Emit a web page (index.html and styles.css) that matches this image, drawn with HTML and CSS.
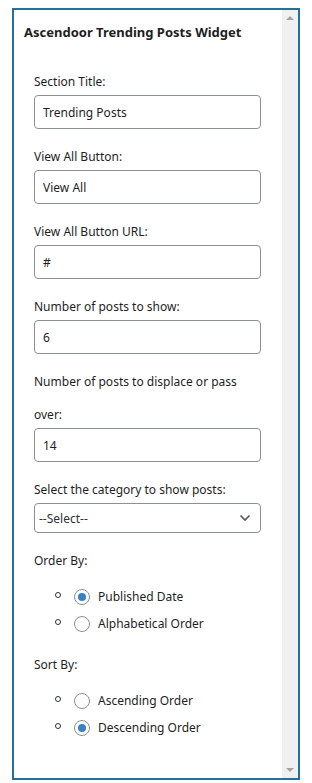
FILE: index.html
```html
<!DOCTYPE html>
<html lang="en">
<head>
  <meta charset="UTF-8" />
  <meta name="viewport" content="width=device-width, initial-scale=1.0"/>
  <title>Ascendoor Trending Posts Widget</title>
  <link rel="stylesheet" href="styles.css">
</head>
<body>
  <div class="widget">
    <div class="widget-body">
      <h3>Ascendoor Trending Posts Widget</h3>
      <form class="widget-form">
        <div class="field">
          <label for="title">Section Title:</label>
          <input type="text" id="title" value="Trending Posts">
        </div>
        <div class="field">
          <label for="button">View All Button:</label>
          <input type="text" id="button" value="View All">
        </div>
        <div class="field">
          <label for="url">View All Button URL:</label>
          <input type="text" id="url" value="#">
        </div>
        <div class="field">
          <label for="count">Number of posts to show:</label>
          <input type="text" id="count" value="6">
        </div>
        <div class="field">
          <label for="offset">Number of posts to displace or pass over:</label>
          <input type="text" id="offset" value="14">
        </div>
        <div class="field">
          <label for="category">Select the category to show posts:</label>
          <div class="select-wrap">
            <select id="category">
              <option>--Select--</option>
            </select>
            <svg class="chevron" width="12" height="8" viewBox="0 0 12 8"><path d="M1.5 1.5 L6 6 L10.5 1.5" fill="none" stroke="#50575e" stroke-width="1.6"/></svg>
          </div>
        </div>
        <div class="field">
          <label>Order By:</label>
          <ul class="choices">
            <li><label class="choice"><input type="radio" name="orderby" checked>Published Date</label></li>
            <li><label class="choice"><input type="radio" name="orderby">Alphabetical Order</label></li>
          </ul>
        </div>
        <div class="field">
          <label>Sort By:</label>
          <ul class="choices">
            <li><label class="choice"><input type="radio" name="order">Ascending Order</label></li>
            <li><label class="choice"><input type="radio" name="order" checked>Descending Order</label></li>
          </ul>
        </div>
      </form>
    </div>
    <div class="scrollbar">
      <span class="arrow up"></span>
      <span class="arrow down"></span>
    </div>
  </div>
</body>
</html>
```

FILE: styles.css
```css
body {
  font-family: 'Noto Sans', 'Open Sans', sans-serif;
  font-size: 12px;
  color: #1e1e1e;
  background: #fff;
  margin: 0;
  padding: 8px 12px;
}
.widget {
  box-sizing: border-box;
  width: 288px;
  height: 772px;
  border: 2px solid #21719a;
  display: flex;
  background: #fff;
}
.widget-body {
  flex: 1;
  padding: 12px 10px 0 10px;
  overflow: hidden;
}
h3 {
  margin: 0;
  font-size: 13px;
  font-weight: 700;
  line-height: 20px;
}
.widget-form {
  margin: 23px 0 0 10px;
  width: 227px;
  display: flex;
  flex-direction: column;
  gap: 11px;
}
.field > label {
  display: block;
  line-height: 33px;
  margin-bottom: -3px;
}
input[type="text"] {
  box-sizing: border-box;
  width: 227px;
  height: 34px;
  border: 1px solid #8c8f94;
  border-radius: 4px;
  padding: 0 8px;
  font: inherit;
  color: #1e1e1e;
  background: #fff;
}
.select-wrap {
  position: relative;
}
select {
  box-sizing: border-box;
  width: 227px;
  height: 30px;
  border: 1px solid #8c8f94;
  border-radius: 4px;
  padding: 0 24px 0 4px;
  font: inherit;
  color: #2c3338;
  background: #fff;
  appearance: none;
}
.chevron {
  position: absolute;
  right: 10px;
  top: 11px;
}
.choices {
  list-style: none;
  margin: 9px 0 0 0;
  padding-left: 21px;
}
.choices li {
  height: 27px;
  display: flex;
  align-items: center;
}
.choices li::before {
  content: "";
  box-sizing: border-box;
  width: 6px;
  height: 6px;
  border: 1.5px solid #2c3338;
  border-radius: 50%;
  margin: 0 13px 4px 0;
}
.choice {
  display: flex;
  align-items: center;
}
input[type="radio"] {
  appearance: none;
  box-sizing: border-box;
  width: 16px;
  height: 16px;
  margin: 0 8px 0 0;
  border: 1px solid #8c8f94;
  border-radius: 50%;
  background: #fff;
  display: grid;
  place-items: center;
}
input[type="radio"]:checked::before {
  content: "";
  width: 8px;
  height: 8px;
  border-radius: 50%;
  background: #3582c4;
}
.scrollbar {
  width: 16px;
  background: #f0f0f0;
  display: flex;
  flex-direction: column;
  justify-content: space-between;
  align-items: center;
  padding: 6px 0;
}
.arrow {
  width: 0;
  height: 0;
  border-left: 4px solid transparent;
  border-right: 4px solid transparent;
}
.arrow.up {
  border-bottom: 4px solid #a3a3a3;
}
.arrow.down {
  border-top: 4px solid #a3a3a3;
}
```
